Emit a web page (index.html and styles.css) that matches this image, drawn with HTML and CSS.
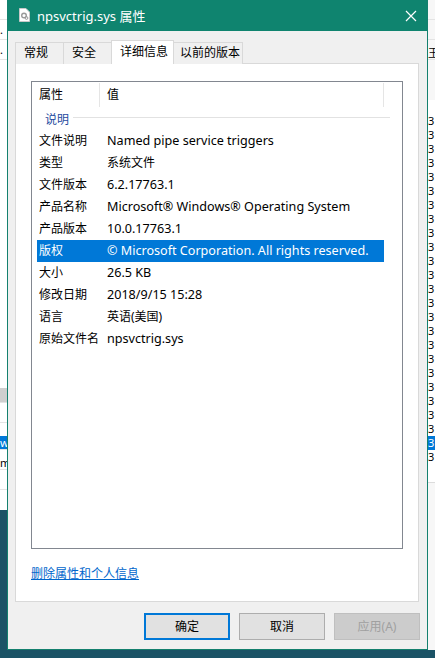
FILE: index.html
```html
<!DOCTYPE html>
<html>
<head>
    <meta charset="utf-8">
    <title>npsvctrig.sys 属性</title>
    <link rel="stylesheet" href="styles.css">
</head>
<body>
    <div class="desk desk-left">
        <div class="desk-row"></div>
        <div class="desk-row dot">.</div>
        <div class="desk-row dot">.</div>
        <div class="desk-gap"></div>
        <div class="desk-row grey"></div>
        <div class="desk-row"></div>
        <div class="desk-row blue">w</div>
        <div class="desk-row">m</div>
        <div class="desk-row"></div>
    </div>

    <div class="window">
        <div class="titlebar">
            <svg class="title-icon" width="11" height="14" viewBox="0 0 11 14">
                <path d="M0.5 0.5 H7 L10.5 4 V13.5 H0.5 Z" fill="#fff" stroke="#c8c8c8"/>
                <circle cx="5" cy="7.5" r="2.3" fill="none" stroke="#9a9a9a" stroke-width="1.4"/>
                <circle cx="7.5" cy="10" r="1.4" fill="none" stroke="#9a9a9a" stroke-width="1"/>
            </svg>
            <span class="title-text">npsvctrig.sys 属性</span>
            <svg class="close" width="12" height="12" viewBox="0 0 12 12">
                <path d="M1 1 L11 11 M11 1 L1 11" stroke="#fff" stroke-width="1.2"/>
            </svg>
        </div>

        <div class="tabs">
            <div class="tab">常规</div>
            <div class="tab">安全</div>
            <div class="tab tab-on">详细信息</div>
            <div class="tab tab-wide">以前的版本</div>
        </div>

        <div class="panel">
            <div class="listbox">
                <div class="list-head">
                    <div class="col-name">属性</div>
                    <div class="col-value">值</div>
                </div>
                <div class="group">
                    <span>说明</span>
                    <div class="group-line"></div>
                </div>
                <div class="row"><div class="col-name">文件说明</div><div class="col-value">Named pipe service triggers</div></div>
                <div class="row"><div class="col-name">类型</div><div class="col-value cjk">系统文件</div></div>
                <div class="row"><div class="col-name">文件版本</div><div class="col-value">6.2.17763.1</div></div>
                <div class="row"><div class="col-name">产品名称</div><div class="col-value">Microsoft® Windows® Operating System</div></div>
                <div class="row"><div class="col-name">产品版本</div><div class="col-value">10.0.17763.1</div></div>
                <div class="row row-on"><div class="col-name">版权</div><div class="col-value">© Microsoft Corporation. All rights reserved.</div></div>
                <div class="row"><div class="col-name">大小</div><div class="col-value">26.5 KB</div></div>
                <div class="row"><div class="col-name">修改日期</div><div class="col-value">2018/9/15 15:28</div></div>
                <div class="row"><div class="col-name">语言</div><div class="col-value cjk">英语(美国)</div></div>
                <div class="row"><div class="col-name">原始文件名</div><div class="col-value">npsvctrig.sys</div></div>
            </div>
            <a class="link" href="#">删除属性和个人信息</a>
        </div>

        <div class="buttons">
            <div class="btn btn-default">确定</div>
            <div class="btn">取消</div>
            <div class="btn btn-off">应用(A)</div>
        </div>
    </div>

    <div class="desk desk-right">
        <div class="desk-row"></div>
        <div class="desk-row"></div>
        <div class="desk-row">王</div>
        <div class="digits">
            <div>3</div><div>3</div><div>3</div><div>3</div><div>3</div>
            <div>3</div><div>3</div><div>3</div><div>3</div><div>3</div>
            <div>3</div><div>3</div><div>3</div><div>3</div><div>3</div>
            <div>3</div><div>3</div><div>3</div><div>3</div><div>3</div>
            <div>3</div><div>3</div><div>3</div>
            <div class="blue">3</div><div>3</div>
        </div>
    </div>
</body>
</html>
```

FILE: styles.css
```css
*{margin: 0; padding: 0; box-sizing: border-box;}
body{width: 435px; height: 658px; overflow: hidden; display: flex; align-items: flex-start;
    background: #1b5366; font-family: "Noto Sans", "Noto Sans CJK SC", sans-serif; font-size: 12px; color: #000;}

/* background app strips */
.desk{width: 7px; background: #fff; overflow: hidden; display: flex; flex-direction: column;
    font-size: 11px; line-height: 14px; white-space: nowrap;}
.desk-left{height: 510px;}
.desk-right{height: 650px; background: #f7f7f7;}
.desk-row{height: 14px; border-bottom: 1px solid #e4e4e4; margin-top: 6px; overflow: hidden;}
.desk-gap{flex: 0 0 322px;}
.desk-row.grey{background: #cfcfcf; height: 15px;}
.desk-row.blue{margin-top: 13px;}
.desk-row.blue, .digits .blue{background: #0078d7; color: #fff;}
.dot{line-height: 8px;}
.digits{margin-top: 40px; background: #fff; padding-top: 14px; border-bottom: 1px solid #dcdcdc; padding-bottom: 18px;}
.digits div{height: 14px; line-height: 14px; overflow: hidden;}

/* dialog */
.window{width: 421px; height: 650px; background: #f0f0f0; border: 1px solid #14806e; border-top: 0;
    display: flex; flex-direction: column;}
.titlebar{height: 31px; background: #0f846f; display: flex; align-items: center; padding: 0 0 0 11px; color: #fff;}
.title-icon{margin-right: 7px; margin-top: -1px;}
.title-text{font-size: 13px; flex: 1;}
.close{margin-right: 10px;}

.tabs{display: flex; align-items: flex-end; margin: 9px 0 0 7px; height: 24px; position: relative; z-index: 1;}
.tab{height: 22px; line-height: 20px; padding-left: 8px; width: 48px; background: #f0f0f0;
    border: 1px solid #d9d9d9; border-right: 0; border-bottom: 0; white-space: nowrap;}
.tab-on{height: 24px; width: 63px; background: #fff; border-right: 1px solid #d9d9d9; line-height: 22px;}
.tab-on + .tab{border-left: 0;}
.tab-wide{width: 69px; padding-left: 6px; border-right: 1px solid #d9d9d9;}

.panel{margin: -1px 8px 0 7px; height: 539px; background: #fff; border: 1px solid #d9d9d9;
    padding: 17px 15px 0 15px; display: flex; flex-direction: column;}
.listbox{height: 468px; border: 1px solid #828790; padding: 0 18px 0 5px;}
.list-head{display: flex; height: 25px; align-items: center;}
.list-head .col-name{border-right: 1px solid #e5e5e5; height: 24px; line-height: 24px;}
.list-head .col-value{border-right: 1px solid #e5e5e5; height: 24px; line-height: 24px; font-size: 12px;}
.col-name{width: 63px; padding-left: 2px; flex: 0 0 63px;}
.col-value{flex: 1; padding-left: 7px; white-space: nowrap; font-size: 12.6px;}
.col-value.cjk{font-size: 12px;}
.group{height: 23px; display: flex; align-items: center; padding-left: 8px; color: #1e4aa0; margin-right: -6px;}
.group span{margin-right: 4px;}
.group-line{flex: 1; height: 1px; background: #e2e2e2; margin-top: -3px;}
.row{display: flex; height: 22px; line-height: 21px;}
.row-on{background: #0078d7; color: #fff;}

.link{margin-top: 15px; color: #0066cc; text-decoration: underline; align-self: flex-start;}

.buttons{display: flex; justify-content: flex-end; gap: 9px; margin: 11px 7px 0 0;}
.btn{width: 86px; height: 27px; line-height: 25px; text-align: center; background: #e1e1e1; border: 1px solid #adadad;}
.btn-default{border: 2px solid #0078d7; line-height: 23px;}
.btn-off{background: #cccccc; border-color: #bfbfbf; color: #a0a0a0;}
```
